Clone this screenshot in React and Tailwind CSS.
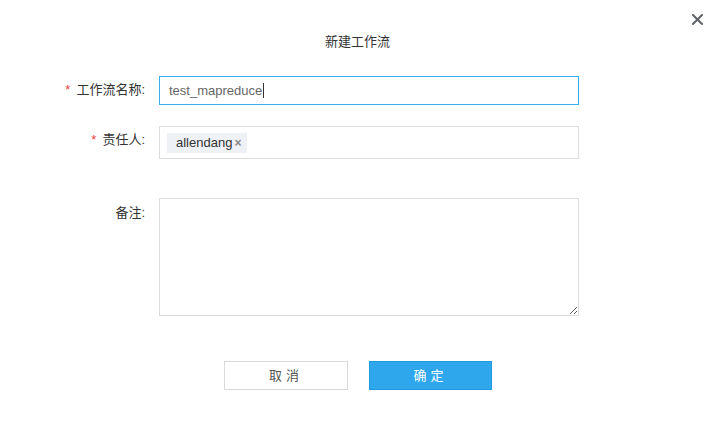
export default function App() {
  const font = { fontFamily: '"Liberation Sans", "Noto Sans CJK SC", sans-serif' };
  return (
    <div className="w-[715px] h-[425px] bg-white relative text-[13px] text-[#333]" style={font}>
      <button className="absolute left-[690px] top-[12px] w-[14px] h-[14px] flex items-center justify-center text-[#5f6368]">
        <svg width="11" height="11" viewBox="0 0 11 11">
          <path d="M1 1L10 10M10 1L1 10" stroke="#5f6368" strokeWidth="2" strokeLinecap="square" />
        </svg>
      </button>

      <div className="pt-[33px] text-center leading-[18px] text-[#333]">新建工作流</div>

      <div className="pt-[25px] flex flex-col">
        {/* name */}
        <div className="flex h-[29px]">
          <div className="w-[147px] pr-[2px] pt-[6px] text-right leading-[16px]">
            <span className="text-[#e64340] mr-[6px]">*</span>工作流名称:
          </div>
          <div className="ml-[12px] w-[420px] h-[29px] border border-[#36aef0] flex items-center px-[9px] text-[#666]">
            test_mapreduce
            <span className="inline-block w-px h-[15px] bg-[#333] ml-[1px]"></span>
          </div>
        </div>

        {/* owner */}
        <div className="flex h-[33px] mt-[21px]">
          <div className="w-[147px] pr-[2px] pt-[6px] text-right leading-[16px]">
            <span className="text-[#e64340] mr-[6px]">*</span>责任人:
          </div>
          <div className="ml-[12px] w-[420px] h-[33px] border border-[#dcdcdc] flex items-center px-[7px]">
            <span className="h-[20px] bg-[#eef1f6] flex items-center pl-[9px] pr-[6px] text-[#333]">
              allendang
              <span className="ml-[2px] text-[#888] text-[12px] font-bold">×</span>
            </span>
          </div>
        </div>

        {/* remark */}
        <div className="flex h-[118px] mt-[39px]">
          <div className="w-[147px] pr-[2px] pt-[7px] text-right leading-[16px]">备注:</div>
          <textarea
            className="block ml-[12px] w-[420px] h-[118px] border border-[#dcdcdc] outline-none resize p-2"
          ></textarea>
        </div>

        {/* buttons */}
        <div className="flex justify-center gap-[21px] mt-[45px] pl-px">
          <button className="w-[124px] h-[29px] border border-[#d9d9d9] bg-white text-[#555] tracking-[4px]">
            取消
          </button>
          <button className="w-[123px] h-[29px] border border-[#1f9ae0] bg-[#2ea7ec] text-white tracking-[4px]">
            确定
          </button>
        </div>
      </div>
    </div>
  );
}
